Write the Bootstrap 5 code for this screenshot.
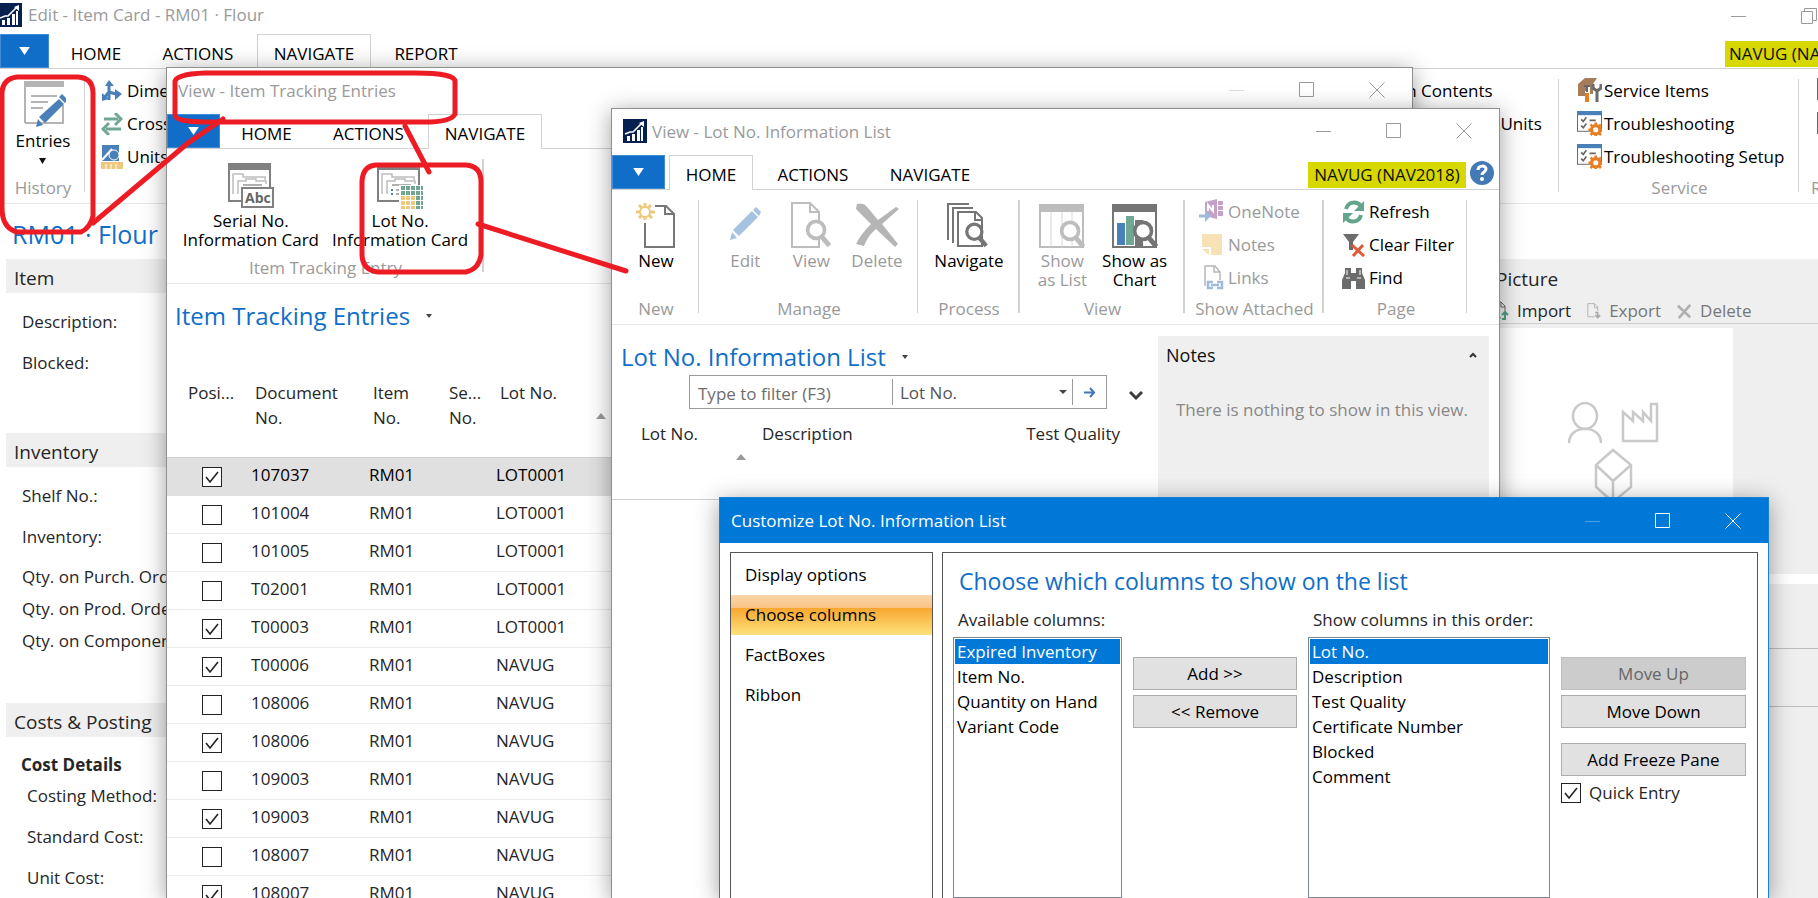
<!DOCTYPE html>
<html lang="en">
<head>
<meta charset="utf-8">
<meta name="viewport" content="width=device-width, initial-scale=1">
<title>Edit - Item Card - RM01 · Flour</title>
<link href="https://cdn.jsdelivr.net/npm/bootstrap@5.3.0/dist/css/bootstrap.min.css" rel="stylesheet">
<style>
:root{--nav-blue:#106ec8;--win-blue:#0078d7;--line:#d2d2d2;--soft:#efefef;--mute:#9a9a9a}
body{font-family:"Open Sans","Noto Sans",sans-serif;font-size:17px;line-height:20px;color:#262626;background:#fff;height:100vh;overflow:hidden;position:relative}
svg{display:block;flex:none}
button{font:inherit;color:inherit}
.win{position:absolute;bottom:0;background:#fff;border:1px solid #8f8f8f;border-bottom:0;box-shadow:0 4px 22px rgba(0,0,0,.38);overflow:hidden;display:flex;flex-direction:column}
.win-tracking{left:166px;right:405px;top:67px}
.win-lots{left:611px;right:318px;top:108px}
.win-custom{left:719px;right:49px;top:497px;border-color:#1a80d2}
/* title bars */
.titlebar{display:flex;align-items:center;height:46px;color:var(--mute);flex:none}
.titlebar .caption{flex:1 1 0;min-width:0;white-space:nowrap}
.ctl{width:70px;height:44px;padding:0 0 3px;border:0;background:none;display:flex;align-items:center;justify-content:center;flex:none}
.ctl svg{fill:none;stroke:currentColor;stroke-width:1}
.ctl:disabled{opacity:.3}
/* ribbon tabs */
.tabs{display:flex;height:35px;flex:none;border-bottom:1px solid var(--line)}
.appbtn{height:34px;background:var(--nav-blue);border:1px solid #3f8bd5;padding:0;display:flex;align-items:center;justify-content:center;color:#fff;flex:none}
.tab{border:1px solid transparent;border-bottom:0;background:none;padding:3px 0 0;color:#000;height:35px;text-align:center;flex:none}
.tab.active{border-color:var(--line);background:#fff}
.company{background:#d6d800;color:#111;height:26px;line-height:26px;margin-top:7px;white-space:nowrap;flex:none}
/* ribbon */
.ribbon{display:flex;height:135px;padding-top:10px;flex:none;border-bottom:1px solid #e6e6e6}
.group{display:flex;flex-direction:column;height:113px;padding-left:2px;border-right:1px solid var(--line);flex:none;color:#000}
.group.thick{border-right-width:2px}
.group-items{display:flex;flex:1;justify-content:center}
.group-name{color:var(--mute);text-align:center;height:20px;line-height:20px;margin-bottom:-6px;white-space:nowrap}
.big{border:0;background:none;padding:0;display:flex;flex-direction:column;align-items:center;line-height:19px;color:#000;white-space:nowrap;flex:none}
.big svg{margin-bottom:2px}
.big:disabled,.small-cmd:disabled{color:var(--mute)}
.stack{display:flex;flex-direction:column;align-items:flex-start;margin-top:-5px;height:99px;flex:none}
.stack.inset{padding-left:12px}
.small-cmd{border:0;background:none;padding:0;display:flex;align-items:center;gap:4px;height:33px;white-space:nowrap;color:#000}
.stack ~ .group-name{margin-top:auto}
.page-head{font-size:24px;line-height:32px;color:var(--nav-blue);margin:0;font-weight:400;white-space:nowrap}
/* card page */
.card-head{font-size:25px;padding:14px 0 9px 12px}
.fasttab{background:var(--soft);height:34px;margin:0 0 0 6px;padding:2px 8px 0;font-size:19px;line-height:34px;font-weight:400}
.field{display:flex;align-items:center;padding-left:22px;height:41px;white-space:nowrap}
.field.tight{height:32px}
.field.sub{padding-left:27px}
.facts{background:var(--soft)}
.picbtn{border:0;background:none;padding:0;display:flex;align-items:center;gap:8px}
.picbtn:disabled{color:#777}
/* grids */
.grid{width:100%;table-layout:fixed;border-collapse:collapse}
.grid th{font-weight:400;vertical-align:top;line-height:25px}
.entries th{height:77px;padding:0 0 0 13px;border-bottom:1px solid var(--line);white-space:nowrap}
.entries td{height:38px;padding:0 0 2px 9px;border-bottom:1px solid #ebebeb}
.entries td:first-child{padding-left:15px}
.entries tr.current td{background:#e0e0e0;color:#000;border-bottom-color:#e0e0e0}
.tick{appearance:none;width:20px;height:20px;margin:3px 0 0;border:1px solid #222;background:#fff center/18px 18px no-repeat;display:block;flex:none}
.tick:checked{background-image:url("data:image/svg+xml,%3Csvg xmlns='http://www.w3.org/2000/svg' viewBox='0 0 18 18'%3E%3Cpath d='M3 9l4 5 8-10' fill='none' stroke='%23222' stroke-width='1.6'/%3E%3C/svg%3E")}
.filter{display:flex;align-items:center;width:418px;height:34px;border:1px solid #9a9a9a;background:#fff;flex:none}
.filter input{border:0;padding:2px 8px 0;width:202px;height:26px;outline:0;color:#666}
.filter input::placeholder{color:#6d6d6d;opacity:1}
.filter select{appearance:none;border:0;border-left:1px solid #9a9a9a;border-right:1px solid #9a9a9a;width:181px;height:26px;padding:2px 7px 0;color:#555;background:url("data:image/svg+xml,%3Csvg xmlns='http://www.w3.org/2000/svg' width='8' height='4'%3E%3Cpath d='M0 0h8L4 4z' fill='%23444'/%3E%3C/svg%3E") right 5px center no-repeat}
.filter button{border:0;background:none;flex:1;height:100%;padding:0;display:flex;align-items:center;justify-content:center}
.lots th{height:90px;padding-top:12px;border-bottom:1px solid var(--line)}
.notes{width:331px;margin:11px 10px 0 0;flex:none}
/* customise dialog */
.dlg-title{height:45px;background:var(--win-blue);color:#fff}
.dlg-title .ctl{padding-bottom:0}
.frame{border:1px solid #555;border-bottom:0;background:#fff}
.nav-col{width:203px;flex:none;padding-top:2px}
.nav-col a{display:block;height:40px;line-height:40px;padding-left:14px;color:#000;text-decoration:none}
.nav-col a.active{background:linear-gradient(#fbd6a8,#fac286 32%,#f8a730 33%,#ffe27c)}
.dlg-head{font-size:23px;padding-left:6px;margin-bottom:10px}
.list-label{height:30px;line-height:26px;padding-left:5px;white-space:nowrap}
.listbox{border:1px solid #7f868f;padding:1px;overflow:hidden;flex:1;background:#fff;outline:0;color:#000;font:inherit;border-radius:0}
.listbox option{height:25px;padding:1px 2px 0;line-height:24px;min-height:25px}
.listbox option:checked{background:linear-gradient(var(--win-blue),var(--win-blue));-webkit-text-fill-color:#fff}
.push{height:33px;border:1px solid #adadad;background:#e1e1e1;color:#000;padding:0;width:100%;border-radius:0}
.push:disabled{background:#ccc;border-color:#bfbfbf;color:#666}
.marks{position:absolute;left:0;top:0;width:100%;height:100%;pointer-events:none;fill:none;stroke:#ed1c24;stroke-width:5;stroke-linecap:round;stroke-linejoin:round}
</style>
</head>
<body>
<svg width="0" height="0" class="position-absolute" aria-hidden="true">
  <symbol id="logo" viewBox="0 0 24 24"><path fill="#06214f" d="M0 0h24v24H0z"/><path fill="#fff" d="M4 17h3v5H4zM9 15h3v7H9zM14 11h3v11h-3zM18 8h2v14h-2z"/><path d="M2 15l5-2 3 0 9-9" fill="none" stroke="#fff" stroke-width="1.6"/><path fill="#fff" d="M21 2v6l-5-4z"/></symbol>
  <symbol id="down" viewBox="0 0 12 9"><path fill="currentColor" d="M0 0h12L6 9z"/></symbol>
  <symbol id="min" viewBox="0 0 16 16"><path d="M0 8.500h15"/></symbol>
  <symbol id="max" viewBox="0 0 16 16"><path d="M.5.5h14v14H.5z"/></symbol>
  <symbol id="close" viewBox="0 0 16 16"><path d="M.5.5l15 15M15.500.5l-15 15"/></symbol>
  <symbol id="caret" viewBox="0 0 6 4"><path fill="#444" d="M0 0h6L3 4z"/></symbol>
  <symbol id="sort" viewBox="0 0 10 6"><path fill="#999" d="M0 6h10L5 0z"/></symbol>
  <symbol id="lens" viewBox="0 0 22 24"><circle cx="9" cy="9" r="7" fill="#fff" stroke="currentColor" stroke-width="3"/><path d="M14 15l6 7" stroke="currentColor" stroke-width="4"/></symbol>
  <symbol id="pencil" viewBox="0 0 32 34"><path fill="currentColor" d="M1 33l2-8 5 6zM4 23L23 4l6 6L10 29zM24 3l3-3 5 5-2 4z"/></symbol>
  <symbol id="trouble" viewBox="0 0 24 24"><path fill="#fff" stroke="#6d6d6d" d="M.5.500h23v19H.500z"/><path fill="#4a80b8" d="M0 0h24v4H0z"/><path d="M4 8l2 2 3-4M4 14l2 2 3-4M12 9h6" fill="none" stroke="#666" stroke-width="1.600"/><circle cx="18" cy="18" r="4" fill="#fff" stroke="#e87d22" stroke-width="3"/><path d="M18 11v3M18 22v2M11 18h3M22 18h2M13 13l2 2M21 21l2 2M23 13l-2 2M13 23l2-2" stroke="#e87d22" stroke-width="2.500"/></symbol>
  <symbol id="card" viewBox="0 0 46 46"><path fill="#fff" stroke="#808080" stroke-width="2" d="M1 1h41v37H1z"/><path fill="#808080" d="M0 0h43v7H0z"/><path d="M5 31V11h10v3h22v3M10 31V18h8v-2h10v2h10v3" fill="none" stroke="#bdbdbd" stroke-width="1.500"/><path d="M15 22h19M19 27h15M19 31h10" fill="none" stroke="#b0b0b0" stroke-width="2"/><path fill="#4a80b8" d="M14 26h2v2h-2zM14 30h2v2h-2z"/></symbol>
</svg>

<!-- Item card -->
<main class="d-flex flex-column h-100 overflow-hidden">
  <header class="titlebar" style="height:34px">
    <svg width="24" height="24" class="me-1" style="margin-left:-2px;margin-bottom:4px"><use href="#logo"/></svg>
    <span class="caption pb-1" style="padding-left:2px">Edit - Item Card - RM01 · Flour</span>
    <button class="ctl" aria-label="Minimize"><svg width="16" height="16"><use href="#min"/></svg></button>
    <button class="ctl" aria-label="Restore" style="margin-right:-26px"><svg width="16" height="16"><path d="M.5 3.500h11v12H.5zM3.500 3.500v-3h12v12h-4"/></svg></button>
  </header>
  <nav class="tabs">
    <button class="appbtn" style="width:49px" aria-label="Application menu"><svg width="11" height="8"><use href="#down"/></svg></button>
    <button class="tab" style="width:94px">HOME</button>
    <button class="tab" style="width:110px">ACTIONS</button>
    <button class="tab active ms-1" style="width:114px">NAVIGATE</button>
    <button class="tab" style="width:110px">REPORT</button>
    <span class="company ms-auto ps-1" style="width:93px">NAVUG (NAV2018)</span>
  </nav>
  <section class="ribbon">
    <div class="group" style="width:85px">
      <div class="group-items"><button class="big"><svg width="46" height="50" viewBox="0 0 46 50"><path d="M5 44V3h38v4M43 26v18H21M5 44h12M11 17h26M11 23h17M11 29h12" fill="none" stroke="#b4b4b4" stroke-width="2"/><path fill="#b4b4b4" d="M4 2h40v6H4z"/><g fill="#4a80b8"><path d="M16 48l2-8 5 6zM19 38l20-18 5 5-19 19zM39 18l3-3 6 6-3 3z"/></g></svg>Entries<svg width="7" height="6" class="mt-2"><path fill="#111" d="M0 0h7L3.500 6z"/></svg></button></div>
      <div class="group-name">History</div>
    </div>
    <div class="group border-0 flex-fill ps-3">
      <div class="stack">
        <button class="small-cmd"><svg width="22" height="22" viewBox="0 0 22 22"><path d="M8 20V3M8 12l10 3M8 12l-5 6" stroke="#4a80b8" stroke-width="3" fill="none"/><path fill="#4a80b8" d="M8 0l5 6H4zM21 14l-7 6V9zM1 21v-8l7 6z"/></svg>Dimensions</button>
        <button class="small-cmd"><svg width="22" height="22" viewBox="0 0 22 22"><path d="M3 6h14M5 16h15" stroke="#6fa793" stroke-width="3"/><path d="M14 0l6 6-6 6M8 10l-6 6 6 6" stroke="#6fa793" stroke-width="3" fill="none"/></svg>Cross References</button>
        <button class="small-cmd"><svg width="22" height="24" viewBox="0 0 22 24"><path fill="#4a80b8" d="M1 0h17v16H1z"/><path d="M1 15L11 4" stroke="#fff" stroke-width="2"/><circle cx="13" cy="10" r="5" fill="#4a80b8" stroke="#fff"/><path fill="#edc97f" d="M0 17h22v7H0z"/><path d="M5 19v5M10 19v5M15 19v5" stroke="#fff"/></svg>Units of Measure</button>
      </div>
    </div>
    <div class="group" style="width:174px"><div class="stack ps-1"><button class="small-cmd">Bin Contents</button><button class="small-cmd">Stockkeeping Units</button></div></div>
    <div class="group" style="width:240px">
      <div class="stack inset ps-3">
        <button class="small-cmd" style="gap:2px"><svg width="25" height="25" viewBox="0 0 25 25"><path fill="#a67c59" d="M1 6l7-6h12l-4 6v10h-3V8h-2v5H8v5H1zM1 5h14"/><path d="M10 8v6M7 8h6" stroke="#666" stroke-width="2"/><path fill="#e87d22" d="M8 15h4v9H8z"/><path d="M20 12v12M16 6v4l4 3 4-3V6" stroke="#6b6b6b" stroke-width="3" fill="none"/></svg>Service Items</button>
        <button class="small-cmd" style="gap:2px"><svg width="25" height="25"><use href="#trouble"/></svg>Troubleshooting</button>
        <button class="small-cmd" style="gap:2px"><svg width="25" height="25"><use href="#trouble"/></svg>Troubleshooting Setup</button>
      </div>
      <div class="group-name">Service</div>
    </div>
    <div class="group border-0" style="width:19px">
      <div class="stack ps-3 pt-1"><svg width="24" height="22" class="mb-2"><path d="M1 1h22v20H1z" fill="#fff" stroke="#666" stroke-width="2"/></svg><svg width="24" height="22" class="mt-1"><path d="M1 1h22v20H1z" fill="#fff" stroke="#666" stroke-width="2"/></svg></div>
      <div class="group-name text-start" style="padding-left:10px">Resources</div>
    </div>
  </section>
  <div class="d-flex flex-fill">
    <div class="flex-fill">
      <h1 class="page-head card-head">RM01 · Flour</h1>
      <h2 class="fasttab mb-2">Item</h2>
      <div class="field">Description:</div>
      <div class="field">Blocked:</div>
      <h2 class="fasttab mb-2" style="margin-top:50px">Inventory</h2>
      <div class="field">Shelf No.:</div>
      <div class="field">Inventory:</div>
      <div class="field tight mt-1">Qty. on Purch. Order:</div>
      <div class="field tight">Qty. on Prod. Order:</div>
      <div class="field tight">Qty. on Component Lines:</div>
      <h2 class="fasttab" style="margin-top:46px">Costs &amp; Posting</h2>
      <div class="field tight fw-bold mt-2 pt-2" style="padding-left:21px">Cost Details</div>
      <div class="field sub" style="margin-top:-2px">Costing Method:</div>
      <div class="field sub">Standard Cost:</div>
      <div class="field sub">Unit Cost:</div>
    </div>
    <aside class="d-flex flex-column" style="width:330px;padding-top:55px">
      <div class="facts" style="height:315px">
        <h2 class="m-0 fw-normal ps-2" style="font-size:19px;line-height:40px">Picture</h2>
        <div class="d-flex align-items-center border-bottom ps-1 gap-3" style="height:25px;border-color:#d0d0d0!important">
          <button class="picbtn"><svg width="17" height="20" viewBox="0 0 17 20"><path d="M1 1h8l4 4v5M1 1v16h8M9 1v5h4" fill="none" stroke="#666"/><path d="M10 18h3v-6M10 14l3-3 3 3" fill="none" stroke="#4fa07f" stroke-width="2"/></svg>Import</button>
          <button class="picbtn" disabled><svg width="14" height="20" viewBox="0 0 17 20"><path d="M1 1h8l4 4v5M1 1v16h8M9 1v5h4" fill="none" stroke="#aaa"/><path d="M10 12h3v6M10 15l3 3 3-3" fill="none" stroke="#aaa" stroke-width="2"/></svg>Export</button>
          <button class="picbtn" disabled><svg width="15" height="15" viewBox="0 0 17 17"><path d="M1 2l14 13M15 1L2 16" stroke="#b0b0b0" stroke-width="3"/></svg>Delete</button>
        </div>
        <div class="bg-white mt-1 ms-1" style="width:241px;height:230px;padding:74px 0 0 75px">
          <svg width="92" height="102" viewBox="0 0 92 102" fill="none" stroke="#c9c9c9" stroke-width="2.500"><ellipse cx="18" cy="14" rx="12" ry="13"/><path d="M2 41c0-19 32-19 32 0M56 10v29h34V2h-6v17l-8-9v9l-10-9v9zM29 63l17-15 18 15v22L46 100 29 85zM29 63l17 16 18-16M46 79v21"/></svg>
        </div>
      </div>
      <div class="facts flex-fill" style="margin-top:10px;padding-top:64px"><hr class="m-0"><hr class="mb-0" style="margin-top:57px"></div>
    </aside>
  </div>
</main>

<!-- Item tracking entries -->
<section class="win win-tracking">
  <header class="titlebar"><span class="caption" style="padding-left:11px">View - Item Tracking Entries</span>
    <button class="ctl" disabled aria-label="Minimize"><svg width="16" height="16"><use href="#min"/></svg></button>
    <button class="ctl" aria-label="Maximize"><svg width="16" height="16"><use href="#max"/></svg></button>
    <button class="ctl" aria-label="Close"><svg width="16" height="16"><use href="#close"/></svg></button>
  </header>
  <nav class="tabs">
    <button class="appbtn" style="width:53px" aria-label="Application menu"><svg width="11" height="8"><use href="#down"/></svg></button>
    <button class="tab" style="width:93px">HOME</button>
    <button class="tab" style="width:111px">ACTIONS</button>
    <button class="tab active ms-1" style="width:114px">NAVIGATE</button>
  </nav>
  <section class="ribbon">
    <div class="group thick" style="width:317px">
      <div class="group-items pt-1" style="gap:13px">
        <button class="big"><svg width="46" height="46" viewBox="0 0 46 46"><use href="#card"/><path fill="#fff" stroke="#808080" stroke-width="2" d="M14 25h31v19H14z"/><text x="17" y="40" font-size="14" font-weight="700" fill="#666">Abc</text></svg>Serial No.<br>Information Card</button>
        <button class="big"><svg width="46" height="46" viewBox="0 0 46 46"><use href="#card"/><path fill="#fff" d="M22 22h24v24H22z"/><path d="M24 25h22M24 30h22" stroke="#6fa793" stroke-width="4" stroke-dasharray="4 1"/><path d="M24 35h14M24 40h14M24 45h14" stroke="#edc97f" stroke-width="4" stroke-dasharray="4 1"/><path d="M39 35h9M39 40h9M39 45h9" stroke="#6fa793" stroke-width="4" stroke-dasharray="4 1"/></svg>Lot No.<br>Information Card</button>
      </div>
      <div class="group-name">Item Tracking Entry</div>
    </div>
  </section>
  <h1 class="page-head d-flex align-items-center ps-2" style="padding-top:16px;margin-bottom:48px">Item Tracking Entries<svg width="6" height="4" class="ms-3"><use href="#caret"/></svg></h1>
  <table class="grid entries">
    <colgroup><col style="width:75px"><col style="width:118px"><col style="width:76px"><col style="width:51px"><col style="width:122px"><col></colgroup>
    <thead><tr><th style="padding-left:21px">Posi...</th><th>Document<br>No.</th><th>Item<br>No.</th><th>Se...<br>No.</th><th><span class="d-flex justify-content-between">Lot No.<svg width="10" height="6" style="margin:33px 3px 0 0"><use href="#sort"/></svg></span></th><th></th></tr></thead>
    <tbody>
      <tr class="current"><td><input class="tick mx-auto" type="checkbox" checked aria-label="Positive"></td><td>107037</td><td>RM01</td><td></td><td>LOT0001</td><td></td></tr>
      <tr><td><input class="tick mx-auto" type="checkbox" aria-label="Positive"></td><td>101004</td><td>RM01</td><td></td><td>LOT0001</td><td></td></tr>
      <tr><td><input class="tick mx-auto" type="checkbox" aria-label="Positive"></td><td>101005</td><td>RM01</td><td></td><td>LOT0001</td><td></td></tr>
      <tr><td><input class="tick mx-auto" type="checkbox" aria-label="Positive"></td><td>T02001</td><td>RM01</td><td></td><td>LOT0001</td><td></td></tr>
      <tr><td><input class="tick mx-auto" type="checkbox" checked aria-label="Positive"></td><td>T00003</td><td>RM01</td><td></td><td>LOT0001</td><td></td></tr>
      <tr><td><input class="tick mx-auto" type="checkbox" checked aria-label="Positive"></td><td>T00006</td><td>RM01</td><td></td><td>NAVUG</td><td></td></tr>
      <tr><td><input class="tick mx-auto" type="checkbox" aria-label="Positive"></td><td>108006</td><td>RM01</td><td></td><td>NAVUG</td><td></td></tr>
      <tr><td><input class="tick mx-auto" type="checkbox" checked aria-label="Positive"></td><td>108006</td><td>RM01</td><td></td><td>NAVUG</td><td></td></tr>
      <tr><td><input class="tick mx-auto" type="checkbox" aria-label="Positive"></td><td>109003</td><td>RM01</td><td></td><td>NAVUG</td><td></td></tr>
      <tr><td><input class="tick mx-auto" type="checkbox" checked aria-label="Positive"></td><td>109003</td><td>RM01</td><td></td><td>NAVUG</td><td></td></tr>
      <tr><td><input class="tick mx-auto" type="checkbox" aria-label="Positive"></td><td>108007</td><td>RM01</td><td></td><td>NAVUG</td><td></td></tr>
      <tr><td><input class="tick mx-auto" type="checkbox" checked aria-label="Positive"></td><td>108007</td><td>RM01</td><td></td><td>NAVUG</td><td></td></tr>
    </tbody>
  </table>
</section>

<!-- Lot no. information list -->
<section class="win win-lots">
  <header class="titlebar"><svg width="24" height="24" style="margin:0 5px 2px 11px"><use href="#logo"/></svg><span class="caption">View - Lot No. Information List</span>
    <button class="ctl" aria-label="Minimize"><svg width="16" height="16"><use href="#min"/></svg></button>
    <button class="ctl" aria-label="Maximize"><svg width="16" height="16"><use href="#max"/></svg></button>
    <button class="ctl" aria-label="Close"><svg width="16" height="16"><use href="#close"/></svg></button>
  </header>
  <nav class="tabs">
    <button class="appbtn" style="width:53px" aria-label="Application menu"><svg width="11" height="8"><use href="#down"/></svg></button>
    <button class="tab active ms-1" style="width:84px">HOME</button>
    <button class="tab" style="width:120px">ACTIONS</button>
    <button class="tab" style="width:114px">NAVIGATE</button>
    <span class="company ms-auto text-center" style="width:158px">NAVUG (NAV2018)</span>
    <svg width="24" height="24" viewBox="0 0 24 24" style="margin:6px 5px 0 4px"><circle cx="12" cy="12" r="12" fill="#4379b5"/><path d="M8 9c0-5 8-5 8-1 0 3-4 3-4 6" fill="none" stroke="#fff" stroke-width="3"/><circle cx="12" cy="18" r="2" fill="#fff"/></svg>
  </nav>
  <section class="ribbon">
    <div class="group" style="width:87px">
      <div class="group-items"><button class="big"><svg width="40" height="49" viewBox="0 0 40 49"><path d="M9 23v24h29V14l-8-8H19M29 5v9h9" fill="#fff" stroke="#777" stroke-width="2"/><path d="M9 3v4M9 15v5M0 12h4M14 12h5M3 5l3 3M13 15l3 3M15 5l-3 3M3 18l3-3" stroke="#edc97f" stroke-width="3"/><circle cx="9" cy="12" r="5" fill="#fff" stroke="#edc97f" stroke-width="2"/></svg>New</button></div>
      <div class="group-name">New</div>
    </div>
    <div class="group" style="width:219px">
      <div class="group-items" style="gap:30px;padding-left:14px">
        <button class="big" disabled><svg width="32" height="49" viewBox="0 0 32 49" style="color:#a5c2e0"><use href="#pencil" y="6" height="36" width="32"/></svg>Edit</button>
        <button class="big" disabled style="margin-right:-10px"><svg width="40" height="49" viewBox="0 0 40 49" style="color:#bdbdbd"><path d="M1 3h18l9 9v35H1zM19 3v9h9" fill="#fff" stroke="#bdbdbd" stroke-width="2"/><use href="#lens" x="14" y="19" width="27" height="29"/></svg>View</button>
        <button class="big" disabled><svg width="44" height="49" viewBox="0 0 44 49"><path fill="#b5b5b5" d="M2 4c6-1 8 0 11 4l10 12L41 7l3 2-17 15 16 20-3 3-19-18C15 34 12 39 9 46l-8-2c4-8 9-14 15-20L1 9z"/></svg>Delete</button>
      </div>
      <div class="group-name">Manage</div>
    </div>
    <div class="group thick" style="width:102px">
      <div class="group-items"><button class="big"><svg width="46" height="49" viewBox="0 0 46 49" style="color:#757575"><path d="M2 40V4h21M7 43V8h20M12 46V12h18l6 6v28zM29 12v8h7" fill="#fff" stroke="#757575" stroke-width="2"/><use href="#lens" x="17" y="22" width="27" height="26"/></svg>Navigate</button></div>
      <div class="group-name">Process</div>
    </div>
    <div class="group thick" style="width:165px">
      <div class="group-items" style="gap:15px">
        <button class="big" disabled><svg width="48" height="49" viewBox="0 0 48 49" style="color:#bdbdbd"><path d="M2 5h43v42H2z" fill="#fff" stroke="#bdbdbd" stroke-width="2"/><path d="M13 10v37M24 10v37M34 10v37" stroke="#d6d6d6"/><path fill="#bdbdbd" d="M1 4h45v8H1z"/><use href="#lens" x="21" y="20" width="27" height="29"/></svg>Show<br>as List</button>
        <button class="big"><svg width="48" height="49" viewBox="0 0 48 49" style="color:#757575"><path d="M2 5h43v42H2z" fill="#fff" stroke="#757575" stroke-width="2"/><path fill="#757575" d="M1 4h45v8H1zM24 20h8v26h-8z"/><path fill="#4a80b8" d="M6 23h8v22H6z"/><path fill="#6fa793" d="M15 16h8v29h-8z"/><use href="#lens" x="21" y="20" width="27" height="29"/></svg>Show as<br>Chart</button>
      </div>
      <div class="group-name">View</div>
    </div>
    <div class="group thick" style="width:139px">
      <div class="stack inset">
        <button class="small-cmd" disabled><svg width="25" height="25" viewBox="0 0 25 25"><path fill="#c5a1c8" d="M6 3l12-3v20L6 17zM19 2h5v4h-5zM19 7h5v4h-5zM19 12h5v5h-5z"/><path d="M9 12V6l5 6V6" stroke="#fff" fill="none" stroke-width="2"/><path d="M0 17h8" stroke="#9fbbdc" stroke-width="3"/><path fill="#9fbbdc" d="M6 11l6 6-6 6z"/></svg>OneNote</button>
        <button class="small-cmd" disabled><svg width="25" height="25" viewBox="0 0 25 25"><path fill="#f6e2b5" d="M3 2h20v21H12v-8H3zM3 17h7v6z"/></svg>Notes</button>
        <button class="small-cmd" disabled><svg width="25" height="25" viewBox="0 0 25 25"><path d="M6 21V1h10l5 6v8M15 1v6h6" fill="none" stroke="#b8b8b8" stroke-width="1.500"/><path d="M14 17H9v6h5M18 17h5v6h-5M12 20h8" fill="none" stroke="#9fbbdc" stroke-width="2.500"/></svg>Links</button>
      </div>
      <div class="group-name">Show Attached</div>
    </div>
    <div class="group" style="width:143px">
      <div class="stack ps-3">
        <button class="small-cmd"><svg width="23" height="24" viewBox="0 0 23 24"><path d="M4 9c2-8 11-8 15-3M19 15c-2 8-11 8-15 3" fill="none" stroke="#62a48c" stroke-width="4"/><path fill="#62a48c" d="M22 1v10H12zM1 23V13h10z"/></svg>Refresh</button>
        <button class="small-cmd"><svg width="23" height="24" viewBox="0 0 23 24"><path fill="#6b6b6b" d="M1 1h16l-6 8v8H7V9z"/><path d="M10 12l12 11M21 12L11 23" stroke="#dd5b39" stroke-width="3"/></svg>Clear Filter</button>
        <button class="small-cmd"><svg width="23" height="24" viewBox="0 0 23 24"><path fill="#6b6b6b" d="M3 2h6v5h5V2h6v5l3 7v9h-9v-8h-5v8H0v-9l3-7z"/><path d="M5 4v5M18 4v5M4 12h4M15 12h4" stroke="#fff"/></svg>Find</button>
      </div>
      <div class="group-name">Page</div>
    </div>
  </section>
  <div class="d-flex flex-fill">
    <div class="flex-fill">
      <h1 class="page-head d-flex align-items-center" style="padding:16px 0 2px 9px">Lot No. Information List<svg width="6" height="4" class="ms-3"><use href="#caret"/></svg></h1>
      <div class="d-flex align-items-center" style="padding-left:77px;gap:22px">
        <div class="filter"><input type="text" placeholder="Type to filter (F3)" aria-label="Filter"><select aria-label="Filter field"><option>Lot No.</option></select><button aria-label="Apply filter"><svg width="12" height="11" viewBox="0 0 12 11"><path d="M0 5.500h10M6 1l4 4.500L6 10" fill="none" stroke="#3f78b5" stroke-width="2"/></svg></button></div>
        <svg width="14" height="10" class="mt-2" viewBox="0 0 14 10"><path d="M1 1l6 6 6-6" fill="none" stroke="#3c3c3c" stroke-width="3"/></svg>
      </div>
      <table class="grid lots">
        <colgroup><col style="width:149px"><col><col style="width:180px"></colgroup>
        <thead><tr><th style="padding-left:29px">Lot No.<svg width="10" height="6" style="margin:8px 14px 0 auto"><use href="#sort"/></svg></th><th>Description</th><th class="text-end" style="padding-right:38px">Test Quality</th></tr></thead>
      </table>
    </div>
    <aside class="facts notes">
      <div class="d-flex justify-content-between align-items-center px-2" style="height:38px;font-size:18px;color:#111"><span>Notes</span><svg width="8" height="6" class="me-1" viewBox="0 0 8 6"><path d="M1 5l3-3 3 3" fill="none" stroke="#333" stroke-width="2"/></svg></div>
      <p class="m-0 text-nowrap" style="padding:26px 0 0 18px;color:#888">There is nothing to show in this view.</p>
    </aside>
  </div>
</section>

<!-- Customize dialog -->
<section class="win win-custom">
  <header class="titlebar dlg-title"><span class="caption" style="padding:0 0 0 11px">Customize Lot No. Information List</span>
    <button class="ctl" disabled aria-label="Minimize"><svg width="16" height="16"><use href="#min"/></svg></button>
    <button class="ctl" aria-label="Maximize"><svg width="16" height="16"><use href="#max"/></svg></button>
    <button class="ctl" aria-label="Close"><svg width="16" height="16"><use href="#close"/></svg></button>
  </header>
  <div class="d-flex flex-fill" style="padding:9px 10px 0;gap:9px">
    <nav class="frame nav-col"><a href="#">Display options</a><a href="#" class="active">Choose columns</a><a href="#">FactBoxes</a><a href="#">Ribbon</a></nav>
    <div class="frame flex-fill d-flex flex-column" style="padding:12px 11px 0 10px">
      <h1 class="page-head dlg-head">Choose which columns to show on the list</h1>
      <div class="d-flex flex-fill">
        <div class="d-flex flex-column" style="width:169px"><label for="avail" class="list-label">Available columns:</label>
          <select id="avail" class="listbox" size="8"><option selected>Expired Inventory</option><option>Item No.</option><option>Quantity on Hand</option><option>Variant Code</option></select></div>
        <div class="d-flex flex-column" style="width:164px;margin:50px 11px 0;gap:5px"><button class="push">Add &gt;&gt;</button><button class="push">&lt;&lt; Remove</button></div>
        <div class="d-flex flex-column flex-fill"><label for="shown" class="list-label">Show columns in this order:</label>
          <select id="shown" class="listbox" size="8"><option selected>Lot No.</option><option>Description</option><option>Test Quality</option><option>Certificate Number</option><option>Blocked</option><option>Comment</option></select></div>
        <div class="d-flex flex-column" style="width:185px;margin:50px 0 0 11px;gap:5px"><button class="push" disabled>Move Up</button><button class="push">Move Down</button><button class="push" style="margin-top:10px">Add Freeze Pane</button>
          <div class="d-flex align-items-center gap-2" style="padding-top:2px"><input class="tick mt-0" type="checkbox" id="quick" checked><label for="quick">Quick Entry</label></div></div>
      </div>
    </div>
  </div>
</section>

<!-- Review marks -->
<svg class="marks" aria-hidden="true">
  <path d="M17 77h61q15 1 15 16v123q-3 12-12 16H17Q2 228 2 208V94Q2 79 17 77z"/>
  <path d="M175 82q0-8 30-9h210q41 0 40 9v32q-4 9-38 8H206q-31 0-31-7z"/>
  <path d="M376 165h90q15 1 15 17v73q-2 14-15 17h-88q-16-2-16-18v-73q1-15 14-16z"/>
  <path d="M93 223L188 143 223 119M405 126l24 46M478 224l148 47"/>
</svg>
<script src="https://cdn.jsdelivr.net/npm/bootstrap@5.3.0/dist/js/bootstrap.bundle.min.js"></script>
</body>
</html>
